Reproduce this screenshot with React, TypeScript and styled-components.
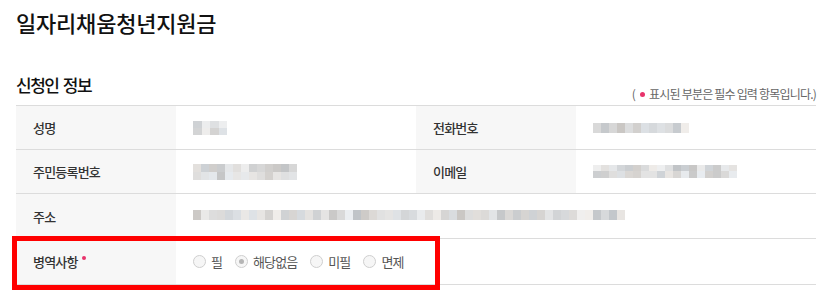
import React from "react";
import styled, { createGlobalStyle } from "styled-components";

const GlobalStyle = createGlobalStyle`
  html, body { margin: 0; padding: 0; background: #fff; }
  body {
    font-family: "Noto Sans CJK KR", "Noto Sans", sans-serif;
    color: #333;
    -webkit-font-smoothing: antialiased;
  }
  * { box-sizing: border-box; }
`;

const Page = styled.div`
  width: 830px;
  height: 294px;
  padding: 6px 14px 0 16px;
  overflow: hidden;
`;

const Title = styled.h1`
  margin: 0;
  font-size: 22px;
  line-height: 32px;
  font-weight: 500;
  color: #111;
  letter-spacing: -0.2px;
`;

const SectionHead = styled.div`
  display: flex;
  justify-content: space-between;
  align-items: flex-end;
  width: 800px;
  margin-top: 35px;
`;

const SectionTitle = styled.h2`
  margin: 0 0 8px;
  font-size: 17px;
  line-height: 24px;
  font-weight: 500;
  color: #111;
  letter-spacing: -1.5px;
  word-spacing: 2px;
`;

const Note = styled.p`
  margin: 0 0 3px;
  font-size: 12px;
  line-height: 16px;
  color: #666;
  letter-spacing: -0.8px;
`;

const Dot = styled.span`
  display: inline-block;
  width: 5px;
  height: 5px;
  border-radius: 50%;
  background: #e8336b;
  vertical-align: middle;
  margin: 0 4px 2px 5px;
`;

const Table = styled.div`
  width: 800px;
  border-top: 1px solid #dcdcdc;
`;

const Row = styled.div<{ $h: number }>`
  position: relative;
  display: grid;
  grid-template-columns: 160px 240px 160px 240px;
  height: ${(p) => p.$h}px;
  border-bottom: 1px solid #dcdcdc;
`;

const Label = styled.div`
  display: flex;
  align-items: center;
  padding-left: 17px;
  background: #f7f7f7;
  font-size: 13px;
  font-weight: 500;
  color: #333;
  letter-spacing: -0.8px;
`;

const Value = styled.div<{ $span?: number }>`
  display: flex;
  align-items: center;
  padding-left: 17px;
  grid-column: span ${(p) => p.$span ?? 1};
  font-size: 13px;
  color: #555;
`;

const Required = styled.span`
  display: inline-block;
  width: 4px;
  height: 4px;
  border-radius: 50%;
  background: #e8336b;
  margin-left: 4px;
  align-self: flex-start;
  margin-top: 17px;
`;

const Pixels = styled.div<{ $cols: number; $cw: number; $rh: number }>`
  display: grid;
  grid-template-columns: repeat(${(p) => p.$cols}, ${(p) => p.$cw}px);
  grid-auto-rows: ${(p) => p.$rh}px;
`;

const RadioGroup = styled.div`
  display: flex;
  align-items: center;
  gap: 13px;
`;

const RadioItem = styled.label`
  display: inline-flex;
  align-items: center;
  gap: 5px;
  font-size: 13px;
  color: #555;
  letter-spacing: -0.9px;
`;

const RadioCircle = styled.span<{ $checked?: boolean }>`
  position: relative;
  width: 13px;
  height: 13px;
  border-radius: 50%;
  border: 1px solid #cfcfcf;
  background: #f6f6f6;
  &::after {
    content: "";
    position: absolute;
    left: 3px;
    top: 3px;
    width: 5px;
    height: 5px;
    border-radius: 50%;
    background: ${(p) => (p.$checked ? "#b5b5b5" : "transparent")};
  }
`;

const Highlight = styled.div`
  position: absolute;
  left: -4px;
  top: -3px;
  width: 428px;
  height: 54px;
  border: 5px solid #ff0000;
  pointer-events: none;
`;

function rand(seed: number) {
  let s = seed;
  return () => {
    s = (s * 9301 + 49297) % 233280;
    return s / 233280;
  };
}

const Blur: React.FC<{ cols: number; rows: number; cw: number; rh: number; seed: number; offset?: number }> = ({
  cols,
  rows,
  cw,
  rh,
  seed,
  offset = 0,
}) => {
  const r = rand(seed);
  const cells = [];
  for (let i = 0; i < cols * rows; i++) {
    const v = 196 + Math.floor(r() * 44);
    const tint = Math.floor(r() * 8) - 4;
    cells.push(
      <span
        key={i}
        style={{ background: `rgb(${v + tint}, ${v}, ${v - tint})` }}
      />
    );
  }
  return (
    <Pixels $cols={cols} $cw={cw} $rh={rh} style={{ marginTop: offset }}>
      {cells}
    </Pixels>
  );
};

const options = [
  { label: "필", checked: false },
  { label: "해당없음", checked: true },
  { label: "미필", checked: false },
  { label: "면제", checked: false },
];

export default function App() {
  return (
    <Page>
      <GlobalStyle />
      <Title>일자리채움청년지원금</Title>
      <SectionHead>
        <SectionTitle>신청인 정보</SectionTitle>
        <Note>
          (<Dot />표시된 부분은 필수 입력 항목입니다.)
        </Note>
      </SectionHead>
      <Table>
        <Row $h={44}>
          <Label>성명</Label>
          <Value>
            <Blur cols={4} rows={2} cw={8.5} rh={7} seed={3} />
          </Value>
          <Label>전화번호</Label>
          <Value>
            <Blur cols={12} rows={1} cw={8} rh={10} seed={7} />
          </Value>
        </Row>
        <Row $h={44}>
          <Label>주민등록번호</Label>
          <Value>
            <Blur cols={13} rows={2} cw={8} rh={8} seed={11} />
          </Value>
          <Label>이메일</Label>
          <Value>
            <Blur cols={18} rows={2} cw={8} rh={6.5} seed={19} offset={-1} />
          </Value>
        </Row>
        <Row $h={45}>
          <Label>주소</Label>
          <Value $span={3}>
            <Blur cols={54} rows={1} cw={8} rh={10} seed={23} offset={-3} />
          </Value>
        </Row>
        <Row $h={46}>
          <Label>
            병역사항
            <Required />
          </Label>
          <Value>
            <RadioGroup>
              {options.map((o) => (
                <RadioItem key={o.label}>
                  <RadioCircle $checked={o.checked} />
                  {o.label}
                </RadioItem>
              ))}
            </RadioGroup>
          </Value>
          <Value $span={2} />
          <Highlight />
        </Row>
      </Table>
    </Page>
  );
}
